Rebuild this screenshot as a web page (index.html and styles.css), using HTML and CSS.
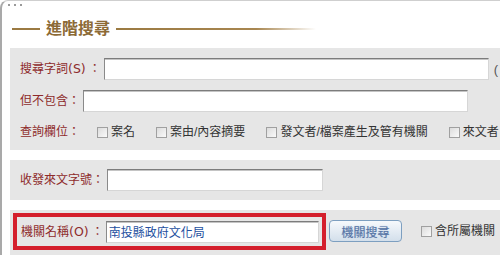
FILE: index.html
```html
<!DOCTYPE html>
<html lang="zh-Hant">
<head>
    <meta charset="UTF-8">
    <title>進階搜尋</title>
    <link rel="stylesheet" href="styles.css">
</head>
<body>
    <div class="panel">
        <div class="dots"><i></i><i></i><i></i></div>
        <div class="title">
            <span class="line"></span>
            <h2>進階搜尋</h2>
            <span class="line fade"></span>
        </div>

        <div class="sec sec1">
            <div class="row">
                <label class="lab">搜尋字詞<span class="key">(S)</span>：</label>
                <input type="text" class="txt w385">
                <span class="more">(</span>
            </div>
            <div class="row">
                <label class="lab">但不包含：</label>
                <input type="text" class="txt w385">
            </div>
            <div class="row">
                <label class="lab">查詢欄位：</label>
                <label class="opt first"><input type="checkbox">案名</label>
                <label class="opt"><input type="checkbox">案由/內容摘要</label>
                <label class="opt"><input type="checkbox">發文者/檔案產生及管有機關</label>
                <label class="opt"><input type="checkbox">來文者</label>
            </div>
        </div>

        <div class="sec sec2">
            <label class="lab">收發來文字號：</label>
            <input type="text" class="txt w216">
        </div>

        <div class="sec sec3">
            <div class="mark">
                <label class="lab">機關名稱<span class="key">(O)</span>：</label>
                <input type="text" class="txt w214 org" value="南投縣政府文化局">
            </div>
            <button class="btn">機關搜尋</button>
            <label class="opt sub"><input type="checkbox">含所屬機關</label>
        </div>
    </div>
</body>
</html>
```

FILE: styles.css
```css
*{
    margin: 0px;
    padding: 0px;
    box-sizing: border-box;
}
body{
    overflow: hidden;
    background-color: #fff;
    font-family: "Liberation Sans", "Noto Sans CJK TC", sans-serif;
    font-size: 12px;
    color: #333;
}
.panel{
    width: 620px;
    height: 300px;
    border-top: 1px solid #cfcfcf;
    border-left: 2px solid #a9a9a9;
    border-top-left-radius: 8px;
}
.dots{
    display: flex;
    gap: 4px;
    height: 2px;
    margin: 3px 0 0 6px;
}
.dots i{
    width: 2px;
    height: 2px;
    background-color: #9a9a9a;
}
.title{
    display: flex;
    align-items: center;
    height: 34px;
    margin: 6px 0 0 10px;
}
.title h2{
    font-size: 16px;
    line-height: 20px;
    font-weight: bold;
    color: #8c6a36;
    margin: 0 6px;
}
.line{
    width: 28px;
    height: 2px;
    background-color: #9b7a42;
}
.line.fade{
    width: 200px;
    background: linear-gradient(to right, #9b7a42 0%, #a88650 70%, rgba(200,170,120,0) 100%);
}
.sec{
    display: flex;
    align-items: center;
    margin-left: 8px;
    background-color: #e6e6e6;
}
.sec1{
    flex-direction: column;
    align-items: stretch;
    margin-top: 2px;
    padding: 10px 0 8px 10px;
}
.row{
    display: flex;
    align-items: center;
    height: 22px;
    margin-bottom: 10px;
}
.row:last-child{
    height: 20px;
    margin-bottom: 0;
}
.lab{
    color: #8e2b2b;
    line-height: 18px;
    white-space: nowrap;
}
.key{
    font-family: "DejaVu Sans", sans-serif;
    font-size: 12.5px;
    margin-right: 3px;
}
.txt{
    height: 22px;
    margin-left: 3px;
    padding: 0 2px;
    border: 1px solid;
    border-color: #7c7c7c #d6d6d6 #d6d6d6 #8a8a8a;
    box-shadow: inset 0 1px 0 #c4c4c4;
    background-color: #fff;
    font-family: inherit;
    font-size: 12px;
    outline: none;
}
.w385{ width: 385px; }
.w216{ width: 216px; }
.w214{ width: 214px; }
.org{
    width: 213px;
    margin-left: 2px;
    color: #2450a0;
}
.more{
    margin-left: 5px;
    color: #555;
    font-size: 13px;
}
.opt{
    display: flex;
    align-items: center;
    margin-left: 21px;
    white-space: nowrap;
    line-height: 18px;
}
.opt.first{
    margin-left: 17px;
}
.opt input{
    appearance: none;
    width: 11px;
    height: 11px;
    margin-right: 3px;
    border: 1px solid #a0a0a0;
    background: linear-gradient(135deg, #dcdcdc, #fafafa);
}
.sec2{
    margin-top: 10px;
    height: 40px;
    padding-left: 10px;
}
.sec3{
    margin-top: 10px;
    height: 60px;
    align-items: flex-start;
    padding: 3px 0 0 3px;
}
.mark{
    display: flex;
    align-items: center;
    width: 313px;
    height: 37px;
    padding: 0 0 0 4px;
    border: 4px solid #d41f2c;
}
.btn{
    width: 73px;
    height: 22px;
    margin: 7px 0 0 3px;
    border: 1px solid #7d9fc0;
    border-radius: 4px;
    background: linear-gradient(#f6f9fc, #d3dfeb);
    color: #5674a6;
    font-family: inherit;
    font-size: 12px;
    text-shadow: 0 0 1px #9fb4d0;
}
.opt.sub{
    margin: 9px 0 0 19px;
}
```
